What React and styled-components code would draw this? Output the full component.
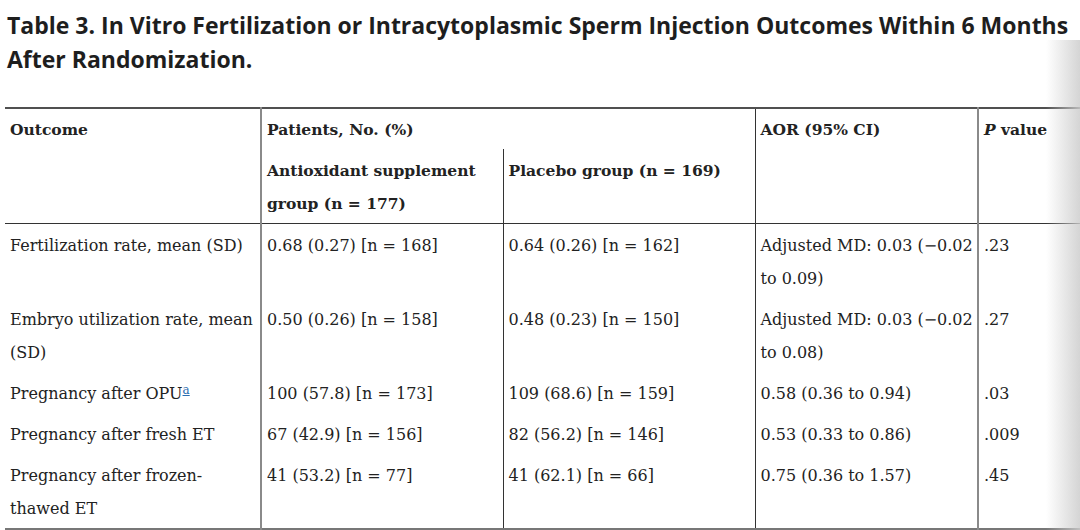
import React from "react";
import styled, { createGlobalStyle } from "styled-components";

const Global = createGlobalStyle`
  html, body { margin: 0; padding: 0; background: #fff; }
  body { width: 1080px; height: 530px; overflow: hidden; }
`;

const Page = styled.div`
  position: relative;
  width: 1080px;
  height: 530px;
  overflow: hidden;
  padding: 0 0 0 5px;
  box-sizing: border-box;
`;

const Title = styled.h1`
  margin: 0;
  padding: 8px 0 0 2px;
  font-family: "Open Sans", Lato, sans-serif;
  font-weight: 700;
  font-size: 23px;
  line-height: 34px;
  letter-spacing: 0;
  color: #1e1e1e;
  white-space: nowrap;
  height: 107px;
  box-sizing: border-box;
`;

const Table = styled.table`
  border-collapse: collapse;
  table-layout: fixed;
  width: 1120px;
  font-family: "DejaVu Serif", serif;
  font-size: 16px;
  line-height: 33px;
  color: #222;
  border-top: 2px solid #505050;
  border-bottom: 2px solid #777;
`;

const padFor = (p) => {
  if (p.$sub) return "5px 3px 3px 5px";
  if (p.$head) return "4px 3px 3px 5px";
  return "5px 3px 3px 5px";
};

const Cell = styled.td`
  vertical-align: top;
  text-align: left;
  padding: ${padFor};
  font-size: ${(p) => (p.$head ? "15.5px" : "16px")};
  font-weight: ${(p) => (p.$head ? 700 : 400)};
  border-left: ${(p) =>
    p.$rule === "heavy" ? "2px solid #8a8a8a" : p.$rule === "thin" ? "1px solid #333" : "none"};
  border-bottom: ${(p) => (p.$headEnd ? "1.5px solid #333" : "none")};
`;

const Sup = styled.sup`
  font-size: 12px;
  line-height: 0;
  color: #2a6db0;
  text-decoration: underline;
  vertical-align: 5px;
`;

const Italic = styled.i`
  font-style: italic;
`;

const Shadow = styled.div`
  position: absolute;
  top: 40px;
  right: 0;
  width: 34px;
  height: 490px;
  background: linear-gradient(to right, rgba(205, 205, 205, 0), rgba(205, 205, 205, 0.85));
  pointer-events: none;
`;

const rows = [
  ["Fertilization rate, mean (SD)", "0.68 (0.27) [n = 168]", "0.64 (0.26) [n = 162]", "Adjusted MD: 0.03 (−0.02 to 0.09)", ".23"],
  ["Embryo utilization rate, mean (SD)", "0.50 (0.26) [n = 158]", "0.48 (0.23) [n = 150]", "Adjusted MD: 0.03 (−0.02 to 0.08)", ".27"],
  ["Pregnancy after OPU", "100 (57.8) [n = 173]", "109 (68.6) [n = 159]", "0.58 (0.36 to 0.94)", ".03", true],
  ["Pregnancy after fresh ET", "67 (42.9) [n = 156]", "82 (56.2) [n = 146]", "0.53 (0.33 to 0.86)", ".009"],
  ["Pregnancy after frozen-thawed ET", "41 (53.2) [n = 77]", "41 (62.1) [n = 66]", "0.75 (0.36 to 1.57)", ".45"],
];

export default function App() {
  return (
    <Page>
      <Global />
      <Title>
        Table 3. In Vitro Fertilization or Intracytoplasmic Sperm Injection Outcomes Within 6 Months
        <br />
        After Randomization.
      </Title>
      <Table>
        <colgroup>
          <col style={{ width: 256 }} />
          <col style={{ width: 242 }} />
          <col style={{ width: 252 }} />
          <col style={{ width: 223 }} />
          <col style={{ width: 147 }} />
        </colgroup>
        <thead>
          <tr>
            <Cell as="th" $head rowSpan={2} $headEnd>Outcome</Cell>
            <Cell as="th" $head colSpan={2} $rule="heavy">Patients, No. (%)</Cell>
            <Cell as="th" $head rowSpan={2} $rule="thin" $headEnd>AOR (95% CI)</Cell>
            <Cell as="th" $head rowSpan={2} $rule="heavy" $headEnd><Italic>P</Italic> value</Cell>
          </tr>
          <tr>
            <Cell as="th" $head $sub $rule="heavy" $headEnd>Antioxidant supplement group (n = 177)</Cell>
            <Cell as="th" $head $sub $rule="thin" $headEnd>Placebo group (n = 169)</Cell>
          </tr>
        </thead>
        <tbody>
          {rows.map((r, i) => (
            <tr key={i}>
              <Cell>
                {r[0]}
                {r[5] && <Sup>a</Sup>}
              </Cell>
              <Cell $rule="heavy">{r[1]}</Cell>
              <Cell $rule="thin">{r[2]}</Cell>
              <Cell $rule="thin">{r[3]}</Cell>
              <Cell $rule="heavy">{r[4]}</Cell>
            </tr>
          ))}
        </tbody>
      </Table>
      <Shadow />
    </Page>
  );
}
